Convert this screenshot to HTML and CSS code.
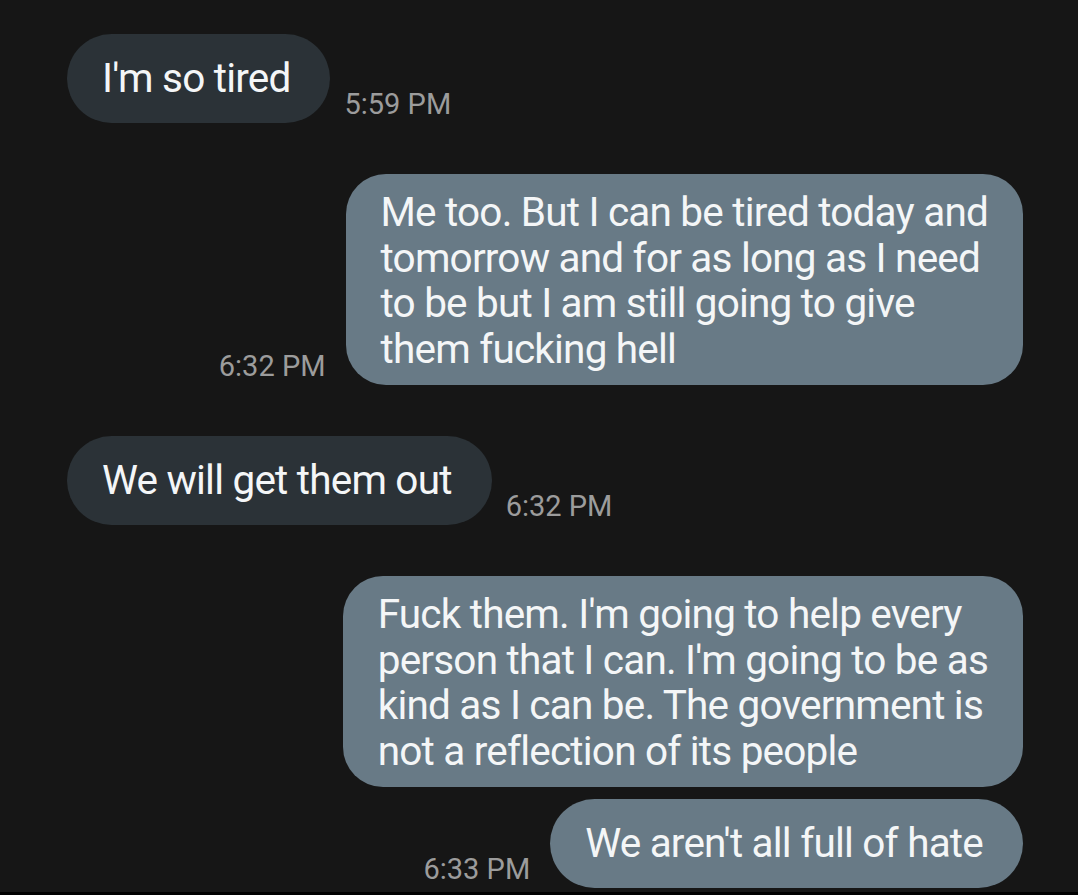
FILE: index.html
```html
<!DOCTYPE html>
<html lang="en">
<head>
<meta charset="utf-8">
<title>Chat</title>
<link rel="stylesheet" href="styles.css">
</head>
<body>
<main class="chat">
  <div class="row in">
    <div class="bubble single">I'm so tired</div>
    <span class="time">5:59 PM</span>
  </div>
  <div class="row out">
    <span class="time">6:32 PM</span>
    <div class="bubble">Me too. But I can be tired today and<br>tomorrow and for as long as I need<br>to be but I am still going to give<br>them fucking hell</div>
  </div>
  <div class="row in">
    <div class="bubble single">We will get them out</div>
    <span class="time">6:32 PM</span>
  </div>
  <div class="row out">
    <div class="bubble">Fuck them. I'm going to help every<br>person that I can. I'm going to be as<br>kind as I can be. The government is<br>not a reflection of its people</div>
  </div>
  <div class="row out tight">
    <span class="time">6:33 PM</span>
    <div class="bubble single">We aren't all full of hate</div>
  </div>
</main>
</body>
</html>
```
FILE: styles.css
```css
html {
  background: #000;
}
body {
  margin: 0;
  font-family: Roboto, "Noto Sans", sans-serif;
  color: #f4f6f7;
}
.chat {
  height: 892px;
  box-sizing: border-box;
  background: #161616;
  padding: 34px 55px 0 67px;
  display: flex;
  flex-direction: column;
  gap: 51px;
  overflow: hidden;
}
.row {
  display: flex;
  align-items: flex-end;
}
.row.in {
  justify-content: flex-start;
  gap: 14px;
}
.row.out {
  justify-content: flex-end;
  gap: 20px;
}
.row.tight {
  margin-top: -39px;
}
.bubble {
  font-size: 40.5px;
  letter-spacing: -0.8px;
  line-height: 45.5px;
  padding: 16px 35px 13px 35px;
  border-radius: 40px;
  white-space: nowrap;
}
.bubble.single {
  height: 89px;
  box-sizing: border-box;
  display: flex;
  align-items: center;
  border-radius: 45px;
  padding: 0 40px 0 35px;
}
.row.in .bubble {
  background: #2b3237;
}
.row.out .bubble {
  background: #687a86;
}
.time {
  font-size: 29px;
  line-height: 29px;
  color: #9c9c9c;
  padding-bottom: 4px;
}
```
